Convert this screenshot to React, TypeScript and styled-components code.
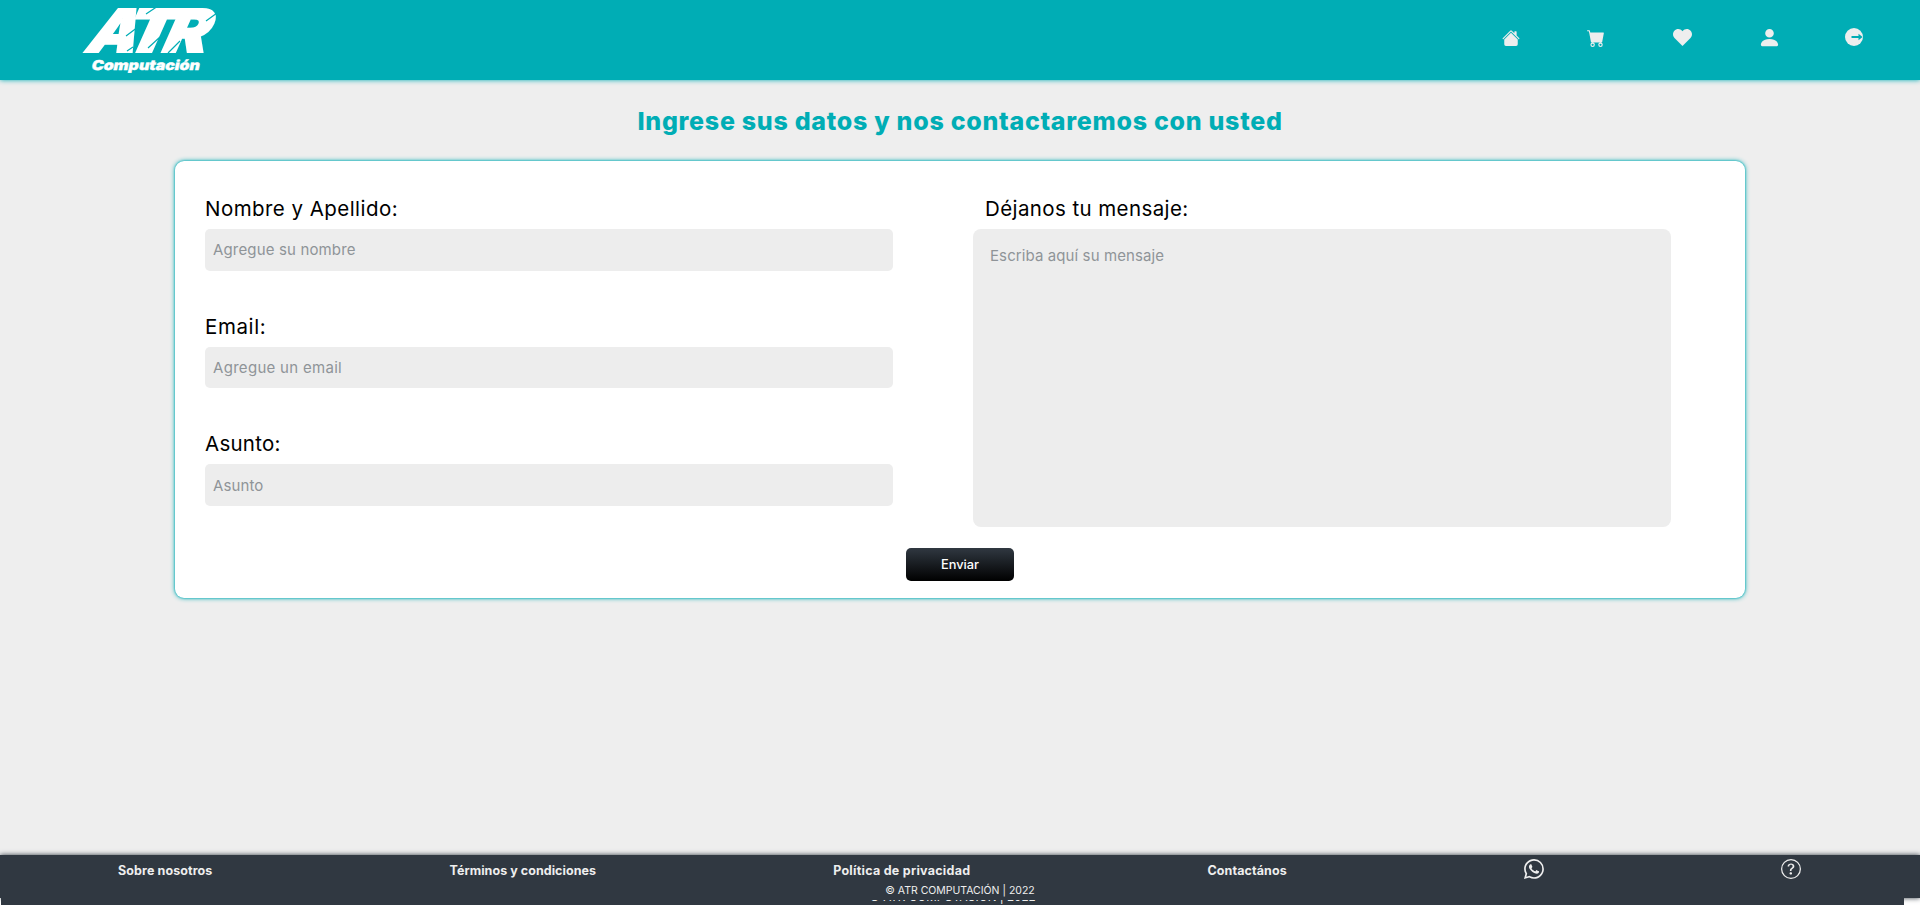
import React from "react";
import styled, { createGlobalStyle } from "styled-components";
import { BsHouseFill, BsCartFill, BsPersonFill, BsWhatsapp, BsQuestionCircle } from "react-icons/bs";

const teal = "#00adb5";
const light = "#eeeeee";
const dark = "#303841";

const GlobalStyle = createGlobalStyle`
  * { box-sizing: border-box; }
  body { margin: 0; background: #fff; font-family: Inter, "Liberation Sans", sans-serif; }
`;

const Page = styled.div`
  width: 1920px;
  height: 912px;
  display: flex;
  flex-direction: column;
  overflow: hidden;
`;
const Shell = styled.div`
  height: 898px;
  flex: none;
  display: flex;
  flex-direction: column;
  background: ${light};
`;
const Header = styled.header`
  height: 80px;
  flex: none;
  display: flex;
  justify-content: space-between;
  background: ${teal};
  box-shadow: 0 0 5px ${teal};
`;
const Logo = styled.svg`
  margin-left: 76px;
  width: 150px;
  height: 80px;
`;
const Nav = styled.nav`
  display: flex;
  align-items: flex-start;
  padding: 28px 58px 0 0;
  gap: 67px;
  color: ${light};
  svg { display: block; flex: none; }
`;
const NavItem = styled.a<{ $w: number; $top?: number }>`
  display: flex;
  justify-content: center;
  width: ${(p) => p.$w}px;
  margin-top: ${(p) => p.$top ?? 0}px;
`;
const Main = styled.main`
  flex: 1;
  display: flex;
  flex-direction: column;
  align-items: center;
`;
const Fit = styled.span<{ $ls?: number }>`
  letter-spacing: ${(p) => p.$ls ?? 0}px;
  white-space: nowrap;
`;
const Title = styled.h1`
  margin: 23px 0 22px;
  height: 36px;
  font-size: 25px;
  line-height: 36px;
  font-weight: 800;
  color: ${teal};
`;
const Card = styled.form`
  width: 1570px;
  height: 437px;
  display: flex;
  flex-direction: column;
  align-items: center;
  background: #fff;
  border-radius: 9px;
  box-shadow: 0 0 5px ${teal}, 0 0 2px ${teal};
`;
const Columns = styled.div`
  width: 100%;
  height: 387px;
  display: flex;
  gap: 80px;
  padding: 33px 0 0 30px;
`;
const Column = styled.div<{ $w: number }>`
  width: ${(p) => p.$w}px;
  display: flex;
  flex-direction: column;
`;
const Label = styled.label<{ $indent?: number }>`
  height: 35px;
  line-height: 30px;
  flex: none;
  font-size: 20.5px;
  color: #000;
  padding-left: ${(p) => p.$indent ?? 0}px;
`;
const Input = styled.input<{ $ls: number }>`
  height: 41.7px;
  flex: none;
  margin-bottom: 41px;
  padding: 0 8px;
  border: 0;
  border-radius: 5px;
  background: #ededed;
  font: 400 15px Inter, sans-serif;
  &::placeholder { color: #8f9498; letter-spacing: ${(p) => p.$ls}px; }
`;
const Message = styled.textarea`
  height: 298px;
  padding: 17px;
  border: 0;
  border-radius: 8px;
  resize: none;
  background: #ededed;
  font: 400 15px/20px Inter, sans-serif;
  &::placeholder { color: #8f9498; letter-spacing: 0.1px; }
`;
const Submit = styled.button`
  width: 108px;
  height: 33px;
  border: 0;
  border-radius: 5px;
  color: #fff;
  background: linear-gradient(${dark}, #000);
  font: 500 12.8px Inter, sans-serif;
`;
const Footer = styled.footer`
  height: 43px;
  flex: none;
  background: ${dark};
  color: ${light};
  box-shadow: 0 0 5px ${dark};
`;
const Links = styled.div`
  display: flex;
  height: 28px;
  padding: 4px 119px 0 118px;
  justify-content: space-between;
  font-size: 12.5px;
  line-height: 24px;
  font-weight: 700;
  svg { display: block; width: 20px; height: 20px; }
`;
const Copyright = styled.div`
  text-align: center;
  font-size: 10.5px;
  line-height: 16px;
`;
const Strip = styled.div`
  width: 1903px;
  height: 7px;
  margin-left: 1px;
  padding-top: 2px;
  flex: none;
  background: ${dark};
  color: ${light};
`;
const StripText = styled.div`
  height: 5px;
  padding-bottom: 1px;
  overflow: hidden;
  display: flex;
  justify-content: center;
  align-items: flex-end;
  font-size: 11.7px;
  line-height: 14px;
`;

const HeartIcon = () => (
  <svg width="19" height="17" viewBox="0 0 19 17" fill="currentColor">
    <path d="M9.5 17 1.5 8.9C-.4 7-.5 3.7 1.4 1.7 3.6-.6 7.3-.5 9.5 2.2 11.7-.5 15.4-.6 17.6 1.7 19.5 3.7 19.4 7 17.5 8.9Z" />
  </svg>
);

const ExitIcon = () => (
  <svg width="18" height="18" viewBox="0 0 18 18" fill="none">
    <circle cx="9" cy="9" r="9" fill={light} />
    <path d="M6.5 8h7V5.7L17.6 9l-4.1 3.3V10h-7z" fill={teal} />
  </svg>
);

export default function App() {
  return (
    <>
      <GlobalStyle />
      <Page>
        <Shell>
          <Header>
            <Logo viewBox="0 0 150 80" fill="#fff">
              <g fontFamily="Inter" fontWeight="900">
                <g transform="translate(7 52) skewX(-24)" fontSize="59" stroke="#fff" strokeWidth="2">
                  <text x="0" textLength="50" lengthAdjust="spacingAndGlyphs">A</text>
                  <text x="36" textLength="50" lengthAdjust="spacingAndGlyphs">T</text>
                  <text x="76" textLength="44" lengthAdjust="spacingAndGlyphs">R</text>
                </g>
                <text transform="translate(15 69.5) skewX(-12)" fontSize="13.6" stroke="#fff" strokeWidth="0.4" textLength="108" lengthAdjust="spacingAndGlyphs">Computación</text>
              </g>
              <path d="M50 36L62 27M70 14L82 6M51 51L57 47M72 48L84 37M92 53L104 41M130 21L141 13" stroke={teal} strokeWidth="1.2" />
            </Logo>
            <Nav>
              <NavItem $w={18} $top={1}><BsHouseFill size={18} /></NavItem>
              <NavItem $w={18} $top={1}><BsCartFill size={18} /></NavItem>
              <NavItem $w={20} $top={1}><HeartIcon /></NavItem>
              <NavItem $w={20} $top={-2}><BsPersonFill size={23} /></NavItem>
              <NavItem $w={16}><ExitIcon /></NavItem>
            </Nav>
          </Header>
          <Main>
            <Title><Fit $ls={0.72}>Ingrese sus datos y nos contactaremos con usted</Fit></Title>
            <Card>
              <Columns>
                <Column $w={688}>
                  <Label><Fit $ls={0.45}>Nombre y Apellido:</Fit></Label>
                  <Input $ls={0.15} placeholder="Agregue su nombre" />
                  <Label><Fit $ls={0.6}>Email:</Fit></Label>
                  <Input $ls={0.3} placeholder="Agregue un email" />
                  <Label><Fit $ls={0.25}>Asunto:</Fit></Label>
                  <Input $ls={0.1} placeholder="Asunto" />
                </Column>
                <Column $w={698}>
                  <Label $indent={12}><Fit $ls={0.4}>Déjanos tu mensaje:</Fit></Label>
                  <Message placeholder="Escriba aquí su mensaje" />
                </Column>
              </Columns>
              <Submit type="button">Enviar</Submit>
            </Card>
          </Main>
          <Footer>
            <Links>
              <Fit $ls={0.1}>Sobre nosotros</Fit>
              <Fit $ls={0.05}>Términos y condiciones</Fit>
              <Fit $ls={0.27}>Política de privacidad</Fit>
              <Fit $ls={0.1}>Contactános</Fit>
              <BsWhatsapp />
              <BsQuestionCircle />
            </Links>
            <Copyright><Fit>© ATR COMPUTACIÓN | 2022</Fit></Copyright>
          </Footer>
        </Shell>
        <Strip><StripText><Fit>© ATR COMPUTACIÓN | 2022</Fit></StripText></Strip>
      </Page>
    </>
  );
}
